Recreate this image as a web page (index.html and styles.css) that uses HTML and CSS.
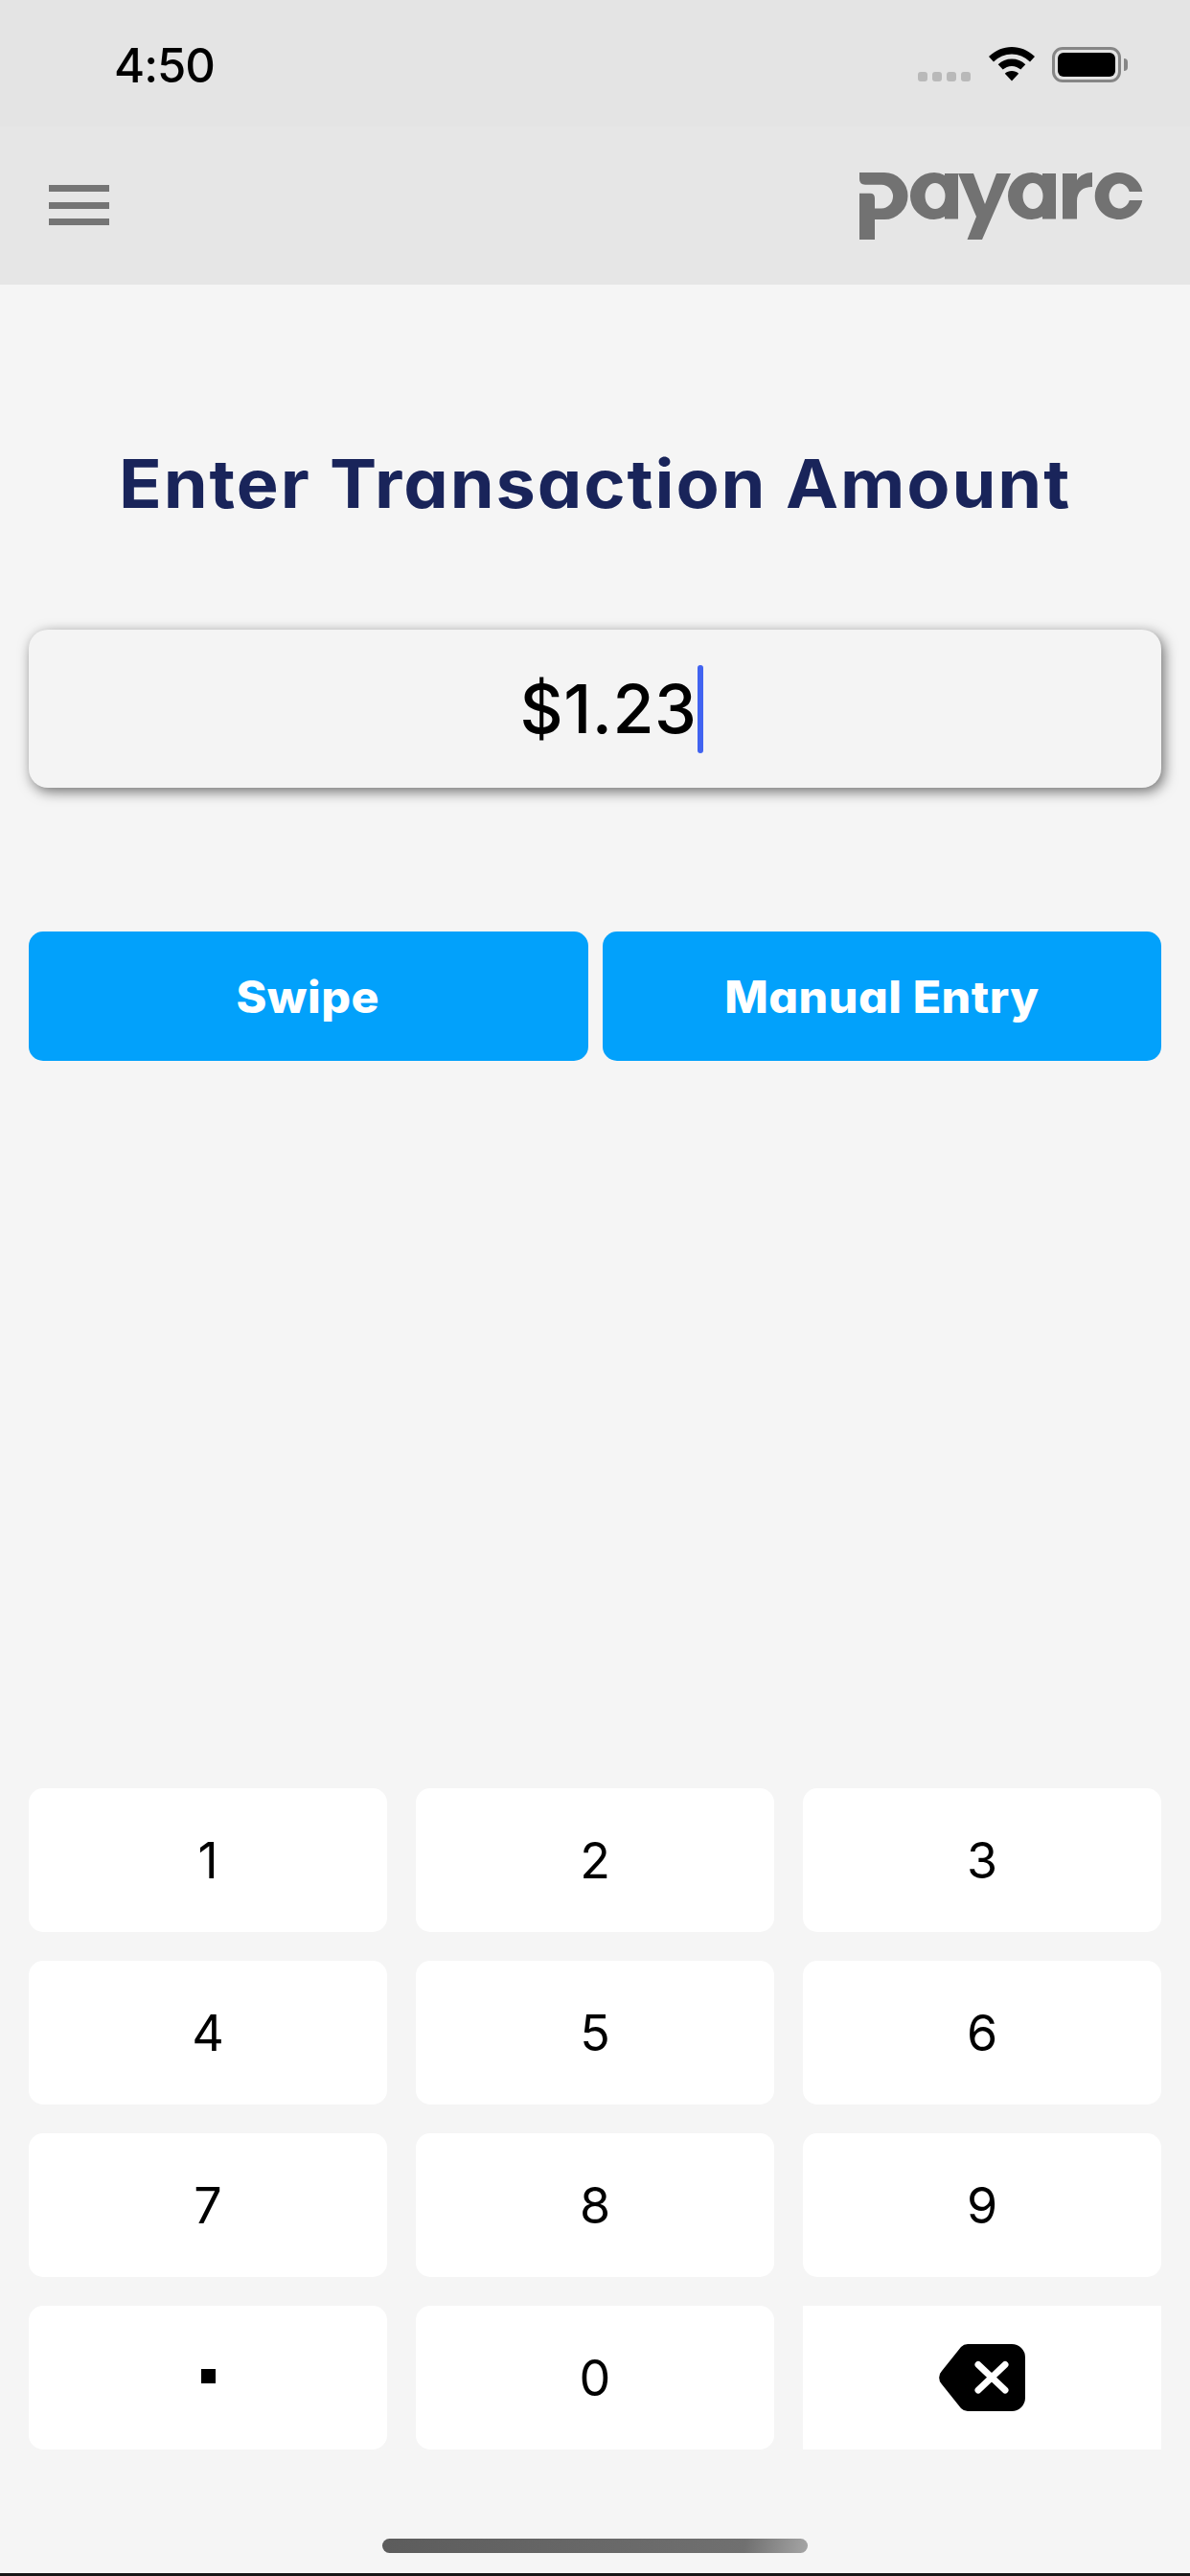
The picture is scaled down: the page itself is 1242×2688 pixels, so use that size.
FILE: index.html
```html
<!DOCTYPE html>
<html lang="en">
<head>
<meta charset="utf-8">
<title>PayArc</title>
<link rel="stylesheet" href="styles.css">
</head>
<body>
<div class="app">
  <div class="status">
    <span class="time">4:50</span>
    <div class="status-icons">
      <div class="signal"><i></i><i></i><i></i><i></i></div>
      <svg class="wifi" width="48" height="36" viewBox="0 0 48 36"><path d="M24 0C15 0 7 3.500 0 10l5 5.500C10.500 10.300 17 7.500 24 7.500s13.500 2.800 19 8L48 10C41 3.500 33 0 24 0z"/><path d="M24 12.500c-5.500 0-10.500 2-14.300 5.700l5 5.400c2.500-2.300 5.800-3.700 9.300-3.700s6.800 1.400 9.300 3.700l5-5.400C34.500 14.500 29.500 12.500 24 12.500z"/><path d="M24 25c-2.800 0-5.300 1-7.200 2.800L24 35.500l7.200-7.700C29.300 26 26.800 25 24 25z"/></svg>
      <div class="battery"><div class="battery-body"><div class="battery-fill"></div></div><div class="battery-cap"></div></div>
    </div>
  </div>
  <header class="topbar">
    <div class="burger"><i></i><i></i><i></i></div>
    <svg class="logo" width="296" height="70" viewBox="0 0 296 70" role="img" aria-label="payarc">
      <g fill="#727272" fill-rule="evenodd">
        <path d="M0 0H26A24.500 24.500 0 0 1 26 49H16V70H0V21.700H11Q16 21.700 16 27V37.500H23A12 12.400 0 0 0 23 12.700H6Q0 12.700 0 7Z"/>
        <path d="M78 0A25 24.500 0 1 0 78 49A24 24 0 0 0 89 46V48.500H103V1H89V3A24 24 0 0 0 78 0ZM79 11A10.500 13.500 0 1 1 79 38A10.500 13.500 0 1 1 79 11Z"/>
        <path d="M103 1H119L131 33L143 1H158L128 70H112.500L122 46Z"/>
        <path d="M180 0A25 24.500 0 1 0 180 49A24 24 0 0 0 191 46V48.500H205V1H191V3A24 24 0 0 0 180 0ZM181 11A10.500 13.500 0 1 1 181 38A10.500 13.500 0 1 1 181 11Z"/>
        <path d="M212 1H227V8C230 3 236 0 243 0V15C233 15 227 20 227 30V48.500H212Z"/>
        <path d="M295.300 20A25 24.500 0 1 0 295.300 29H281.800A11 13 0 1 1 281.800 20Z"/>
      </g>
    </svg>
  </header>
  <main class="content">
    <h1 class="title">Enter Transaction Amount</h1>
    <div class="amount"><span class="amount-text">$1.23</span><span class="caret"></span></div>
    <div class="actions">
      <button class="action"><span class="action-label">Swipe</span></button>
      <button class="action"><span class="action-label">Manual Entry</span></button>
    </div>
    <div class="keypad">
      <button class="key">1</button><button class="key">2</button><button class="key">3</button>
      <button class="key">4</button><button class="key">5</button><button class="key">6</button>
      <button class="key">7</button><button class="key">8</button><button class="key">9</button>
      <button class="key"><span class="dot"></span></button><button class="key">0</button>
      <button class="key key-back">
        <svg width="90" height="70" viewBox="0 0 90 70"><path fill="#000" d="M30 0h46a14 14 0 0 1 14 14v42a14 14 0 0 1-14 14H30a10 10 0 0 1-7-3L3 42a10 10 0 0 1 0-14L23 3a10 10 0 0 1 7-3z"/><path stroke="#fff" stroke-width="7" stroke-linecap="round" fill="none" d="M41 21.500l28 26.500M69 21.500L41 48"/></svg>
      </button>
    </div>
  </main>
  <div class="home"><div class="home-bar"></div></div>
  <div class="edge"></div>
</div>
</body>
</html>
```
FILE: styles.css
```css
* { box-sizing: border-box; }
html, body { margin: 0; padding: 0; }
body { width: 1242px; height: 2688px; overflow: hidden; background: #f5f5f5; font-family: "Inter", "Liberation Sans", sans-serif; color: #000; }
.app { width: 1242px; height: 2688px; display: flex; flex-direction: column; }
.status { height: 132px; background: #e4e4e4; display: flex; justify-content: space-between; padding: 44px 65px 0 119px; }
.time { font-size: 49px; font-weight: 500; line-height: 49px; letter-spacing: -1px; }
.status-icons { display: flex; align-items: flex-start; padding-top: 5px; }
.signal { display: flex; gap: 5px; margin-top: 26px; margin-right: 19px; }
.signal i { width: 10px; height: 10px; border-radius: 3px; background: #b9b9b9; }
.wifi { margin-right: 18px; }
.battery { display: flex; align-items: center; }
.battery-body { width: 72px; height: 37px; border: 3px solid #868686; border-radius: 11px; padding: 3px; }
.battery-fill { width: 100%; height: 100%; background: #000; border-radius: 6px; }
.battery-cap { width: 4px; height: 13px; background: #868686; border-radius: 0 6px 6px 0; margin-left: 3px; }
.topbar { height: 165px; background: #e6e6e6; display: flex; justify-content: space-between; align-items: center; padding: 0 49px 0 51px; }
.burger { display: flex; flex-direction: column; gap: 10.500px; margin-top: -1px; }
.burger i { display: block; width: 63px; height: 7px; background: #757575; }
.logo { margin-top: 1px; }
.content { display: flex; flex-direction: column; padding: 0 30px; }
.title { margin: 0; padding-top: 173px; height: 240px; text-align: center; font-size: 70px; line-height: 70px; font-weight: 700; color: #19245a; letter-spacing: 1.800px; font-feature-settings: "cv11" 1; transform: scaleX(1.055); }
.amount { margin-top: 120px; height: 165px; background: #f4f4f4; border-radius: 20px; box-shadow: 3px 4px 14px rgba(0,0,0,.55); display: flex; justify-content: center; align-items: center; padding-left: 34px; }
.amount-text { font-size: 70px; font-weight: 500; letter-spacing: 0.500px; }
.caret { width: 6px; height: 92px; background: #4163f0; border-radius: 3px; }
.actions { margin-top: 150px; display: flex; gap: 15px; }
.action { flex: 1; height: 135px; border: 0; border-radius: 15px; background: #02a1fb; color: #fff; font-family: inherit; font-size: 46px; font-weight: 800; font-feature-settings: "cv11" 1; }
.action-label { display: inline-block; letter-spacing: 0.500px; transform: scaleX(1.05); }
.keypad { margin-top: 759px; display: grid; grid-template-columns: repeat(3, 1fr); grid-auto-rows: 150px; gap: 30px; }
.key { border: 0; border-radius: 15px; background: #fff; font-family: inherit; font-size: 52px; font-weight: 400; color: #000; display: flex; align-items: center; justify-content: center; padding: 0; }
.key-back { border-radius: 0; }
.dot { width: 15px; height: 15px; background: #000; margin-bottom: 3px; }
.home { margin-top: 93px; padding: 0 399px; }
.home-bar { height: 15px; border-radius: 8px; background: linear-gradient(100deg, #5c5c5c 0%, #707070 85%, #a5a5a5 100%); }
.edge { margin-top: 21px; height: 3px; background: #161616; }
```
